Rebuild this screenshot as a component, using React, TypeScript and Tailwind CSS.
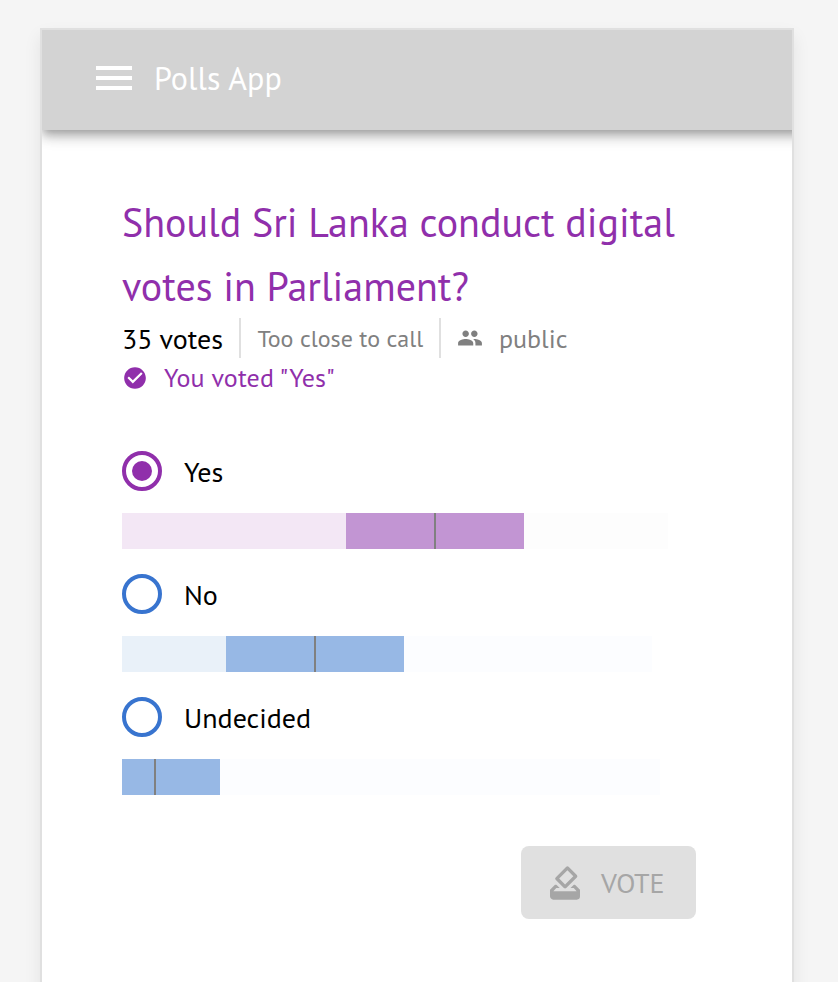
import { MdMenu, MdCheckCircle, MdGroup, MdHowToVote } from "react-icons/md";

type Choice = {
  label: string;
  selected?: boolean;
  low: number;
  mid: number;
  high: number;
  total: number;
};

const choices: Choice[] = [
  { label: "Yes", selected: true, low: 224, mid: 312, high: 402, total: 546 },
  { label: "No", low: 104, mid: 192, high: 282, total: 530 },
  { label: "Undecided", low: 0, mid: 32, high: 98, total: 538 },
];

function Radio({ selected }: { selected?: boolean }) {
  return (
    <span
      className={
        "flex size-10 shrink-0 items-center justify-center rounded-full border-4 " +
        (selected ? "border-[#902fab]" : "border-[#3874cf]")
      }
    >
      {selected && <span className="size-5 rounded-full bg-[#902fab]" />}
    </span>
  );
}

function RangeBar({ choice }: { choice: Choice }) {
  const { low, mid, high, total, selected } = choice;
  const strong = selected ? "bg-[#c295d3]" : "bg-[#97b8e5]";
  return (
    <div className="mt-[22px] flex h-9">
      <div className={selected ? "bg-[#f3e7f5]" : "bg-[#e9f1f9]"} style={{ width: low }} />
      <div className={strong} style={{ width: mid - low }} />
      <div className="w-0.5 bg-[#808080]" />
      <div className={strong} style={{ width: high - mid - 2 }} />
      <div className={selected ? "bg-[#fdfdfd]" : "bg-[#fcfdff]"} style={{ width: total - high }} />
    </div>
  );
}

export default function App() {
  return (
    <div className="h-[982px] overflow-hidden bg-[#f5f5f5] pt-7 pl-10 font-['PT_Sans','Noto_Sans',sans-serif]">
      <main className="h-[1000px] w-[754px] border-2 border-[#e0e0e0] bg-white shadow-[0_8px_16px_rgba(0,0,0,0.08)]">
        <div className="h-[125px] overflow-hidden">
          <header className="-mr-5 flex h-[100px] items-center bg-[#d3d3d3] pl-12 text-white shadow-[0_4px_8px_-2px_rgba(0,0,0,0.22),0_8px_10px_rgba(0,0,0,0.16),0_2px_20px_rgba(0,0,0,0.12)]">
            <MdMenu className="-mt-1 size-12" />
            <span className="-mt-1 ml-4 whitespace-nowrap text-[32px] tracking-[0.1px]">Polls App</span>
          </header>
        </div>
        <section className="px-20 pt-[35px]">
          <h1 className="text-[40px] leading-[64px] text-[#902fab]">
            <span className="block whitespace-nowrap">Should Sri Lanka conduct digital</span>
            <span className="block whitespace-nowrap">votes in Parliament?</span>
          </h1>
          <div className="flex h-10 items-center whitespace-nowrap text-[#808080]">
            <span className="w-[117px] pt-0.5 text-[28px] text-black">35 votes</span>
            <span className="flex h-10 w-[202px] items-center border-x-2 border-[#e0e0e0] pt-0.5 pl-[16.5px] text-[24px]">
              Too close to call
            </span>
            <MdGroup className="ml-4 size-[26px]" />
            <span className="ml-4 text-[26px]">public</span>
          </div>
          <div className="flex h-10 items-center whitespace-nowrap text-[#902fab]">
            <MdCheckCircle className="size-[26px]" />
            <span className="-mt-px ml-4 text-[26px] tracking-[0.15px]">You voted "Yes"</span>
          </div>
          <div className="mt-[53px] flex flex-col gap-[25px]">
            {choices.map((choice) => (
              <div key={choice.label}>
                <div className="flex h-10 items-center">
                  <Radio selected={choice.selected} />
                  <span className="ml-[22px] pt-0.5 text-[28px] text-black">{choice.label}</span>
                </div>
                <RangeBar choice={choice} />
              </div>
            ))}
          </div>
          <button className="mt-[51px] ml-[399px] flex h-[73px] w-[175px] items-center rounded-lg bg-[#e0e0e0] pl-6 text-[#a6a6a6]">
            <MdHowToVote className="size-10" />
            <span className="ml-4 text-[28px]">VOTE</span>
          </button>
        </section>
      </main>
    </div>
  );
}
